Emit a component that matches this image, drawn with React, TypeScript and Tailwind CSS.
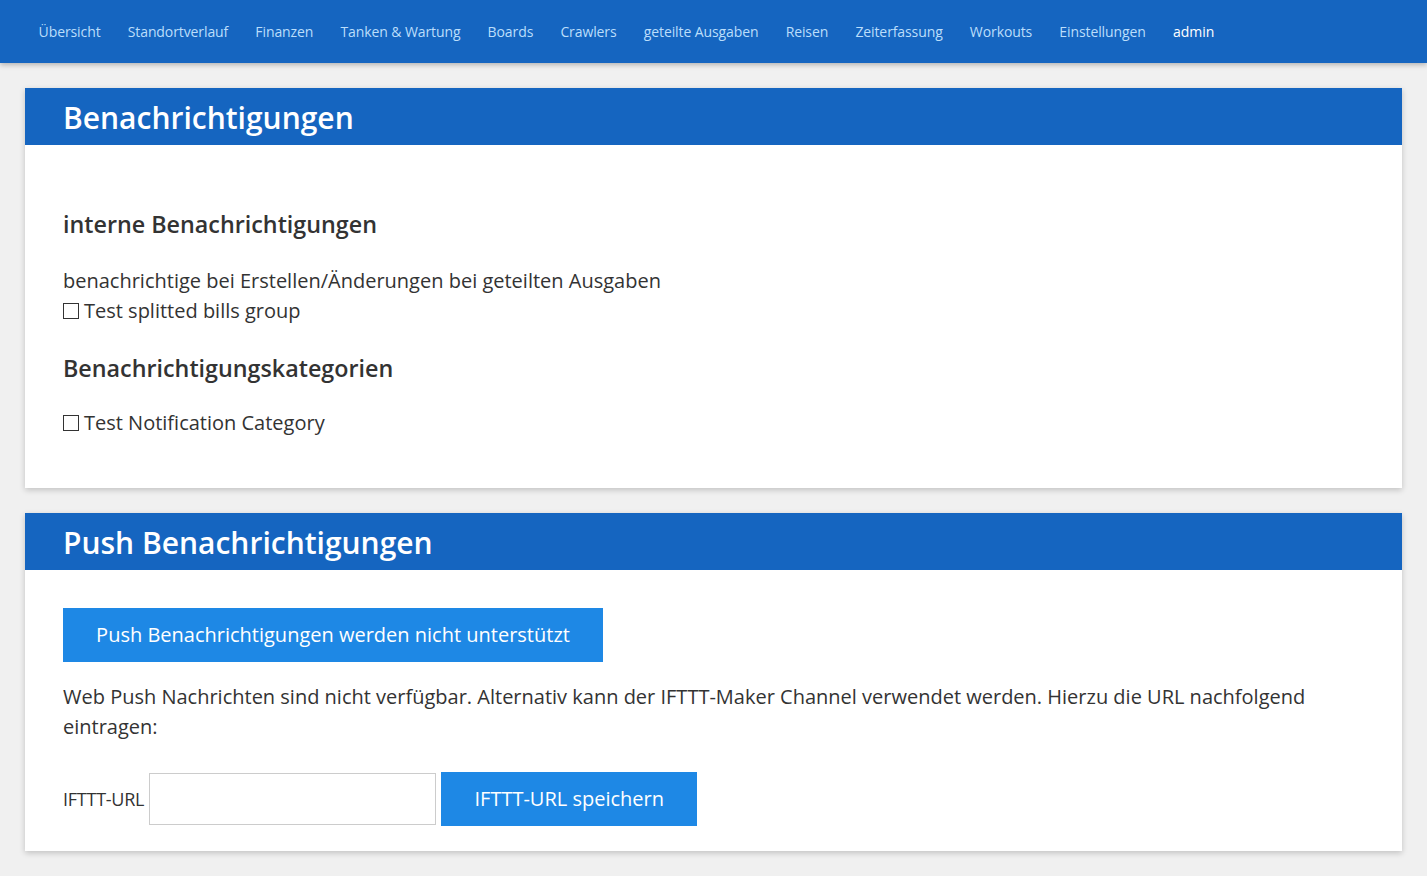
import React from "react";

const navItems = [
  "Übersicht",
  "Standortverlauf",
  "Finanzen",
  "Tanken & Wartung",
  "Boards",
  "Crawlers",
  "geteilte Ausgaben",
  "Reisen",
  "Zeiterfassung",
  "Workouts",
  "Einstellungen",
];

function Checkbox({ label }: { label: string }) {
  return (
    <label className="flex items-center gap-[5px]">
      <span className="inline-block w-[16px] h-[16px] border border-[#333] bg-white" />
      <span>{label}</span>
    </label>
  );
}

export default function App() {
  return (
    <div
      className="min-h-[876px] bg-[#f0f0f0] text-[#333]"
      style={{ fontFamily: '"Open Sans", "Noto Sans", sans-serif' }}
    >
      <nav className="h-[63px] bg-[#1565c0] flex items-center pl-[25px] shadow-[0_2px_5px_rgba(0,0,0,0.25)] relative">
        {navItems.map((n) => (
          <span key={n} className="px-[13.6px] text-[14px] tracking-[-0.1px] text-[#bbdefb]">
            {n}
          </span>
        ))}
        <span className="px-[13.6px] text-[14px] text-white font-medium">admin</span>
      </nav>

      <div className="px-[25px] pt-[25px] flex flex-col gap-[25px]">
        <section className="bg-white shadow-[0_2px_6px_rgba(0,0,0,0.2)]">
          <div className="bg-[#1565c0] h-[57px] flex items-center px-[38px]">
            <h1 className="text-white text-[30px] font-semibold translate-y-[1px]">Benachrichtigungen</h1>
          </div>
          <div className="px-[38px] pt-[63px] pb-[50px] text-[20px]">
            <h2 className="text-[23.3px] font-semibold leading-[32px]">interne Benachrichtigungen</h2>
            <p className="mt-[26px] leading-[30px]">
              benachrichtige bei Erstellen/Änderungen bei geteilten Ausgaben
            </p>
            <Checkbox label="Test splitted bills group" />
            <h2 className="text-[23.3px] font-semibold leading-[32px] mt-[26px]">
              Benachrichtigungskategorien
            </h2>
            <div className="mt-[24px] leading-[30px]">
              <Checkbox label="Test Notification Category" />
            </div>
          </div>
        </section>

        <section className="bg-white shadow-[0_2px_6px_rgba(0,0,0,0.2)]">
          <div className="bg-[#1565c0] h-[57px] flex items-center px-[38px]">
            <h1 className="text-white text-[30px] font-semibold translate-y-[1px]">Push Benachrichtigungen</h1>
          </div>
          <div className="px-[38px] pt-[38px] pb-[25px] text-[20px]">
            <div className="inline-flex items-center justify-center h-[54px] w-[540px] bg-[#1e88e5] text-white">
              Push Benachrichtigungen werden nicht unterstützt
            </div>
            <p className="mt-[20px] leading-[30px]">
              Web Push Nachrichten sind nicht verfügbar. Alternativ kann der IFTTT-Maker Channel verwendet werden. Hierzu die URL nachfolgend eintragen:
            </p>
            <div className="mt-[30px] flex items-center">
              <span className="text-[18px] tracking-[-0.25px] mr-[5px]">IFTTT-URL</span>
              <div className="w-[287px] h-[52px] border border-[#ccc] bg-white" />
              <div className="ml-[5px] w-[256px] h-[54px] bg-[#1e88e5] text-white flex items-center justify-center">
                IFTTT-URL speichern
              </div>
            </div>
          </div>
        </section>
      </div>
    </div>
  );
}
